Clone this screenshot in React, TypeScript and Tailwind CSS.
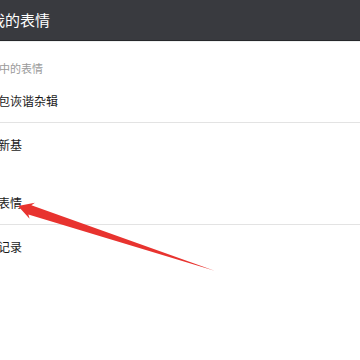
import React from "react";

const packs = [
  { id: "1", name: "表情包诙谐杂辑", offset: "-ml-[26px]" },
  { id: "2", name: "萌新基", offset: "-ml-[14px]" },
];

const others = [
  { id: "3", name: "添加的单个表情", offset: "-ml-[62px]" },
  { id: "4", name: "购买记录", offset: "-ml-[26px]" },
];

const Row = ({ name, offset, divider }: { name: string; offset: string; divider: boolean }) => (
  <div
    className={`flex items-center h-[43px] whitespace-nowrap ${
      divider ? "border-b border-[#e3e3e3]" : ""
    }`}
  >
    <span className={`${offset} text-[12px] leading-[14px] text-[#1a1a1a]`}>{name}</span>
  </div>
);

const App = () => {
  return (
    <div
      className="relative w-[360px] h-[360px] overflow-hidden bg-white"
      style={{ fontFamily: '"Noto Sans CJK SC", "Noto Sans", sans-serif' }}
    >
      {/* Header */}
      <header className="h-[41px] bg-[#393a3f] border-b border-[#26272a] flex items-center whitespace-nowrap">
        <h1 className="-ml-[10px] text-[15px] leading-[18px] text-white">我的表情</h1>
      </header>
      <div className="h-px bg-[#eef0f0]" />

      {/* Section label */}
      <div className="pt-[20px] pb-[5px] whitespace-nowrap">
        <p className="-ml-[45px] text-[11px] leading-[13px] text-[#9a9a9a]">聊天面板中的表情</p>
      </div>

      {/* Packs */}
      <div>
        {packs.map((p, i) => (
          <Row key={p.id} name={p.name} offset={p.offset} divider={i < packs.length - 1} />
        ))}
      </div>

      {/* Other entries */}
      <div className="mt-[16px]">
        {others.map((p, i) => (
          <Row key={p.id} name={p.name} offset={p.offset} divider={i < others.length - 1} />
        ))}
      </div>

      {/* Annotation arrow */}
      <svg
        className="absolute inset-0 pointer-events-none"
        width="360"
        height="360"
        viewBox="0 0 360 360"
      >
        <g transform="translate(18 206) rotate(18.26)">
          <polygon
            points="0,0 15,-8.5 12.5,-4.8 207,0 12.5,4.8 15,8.5"
            fill="#e8332f"
          />
        </g>
      </svg>
    </div>
  );
};

export default App;
